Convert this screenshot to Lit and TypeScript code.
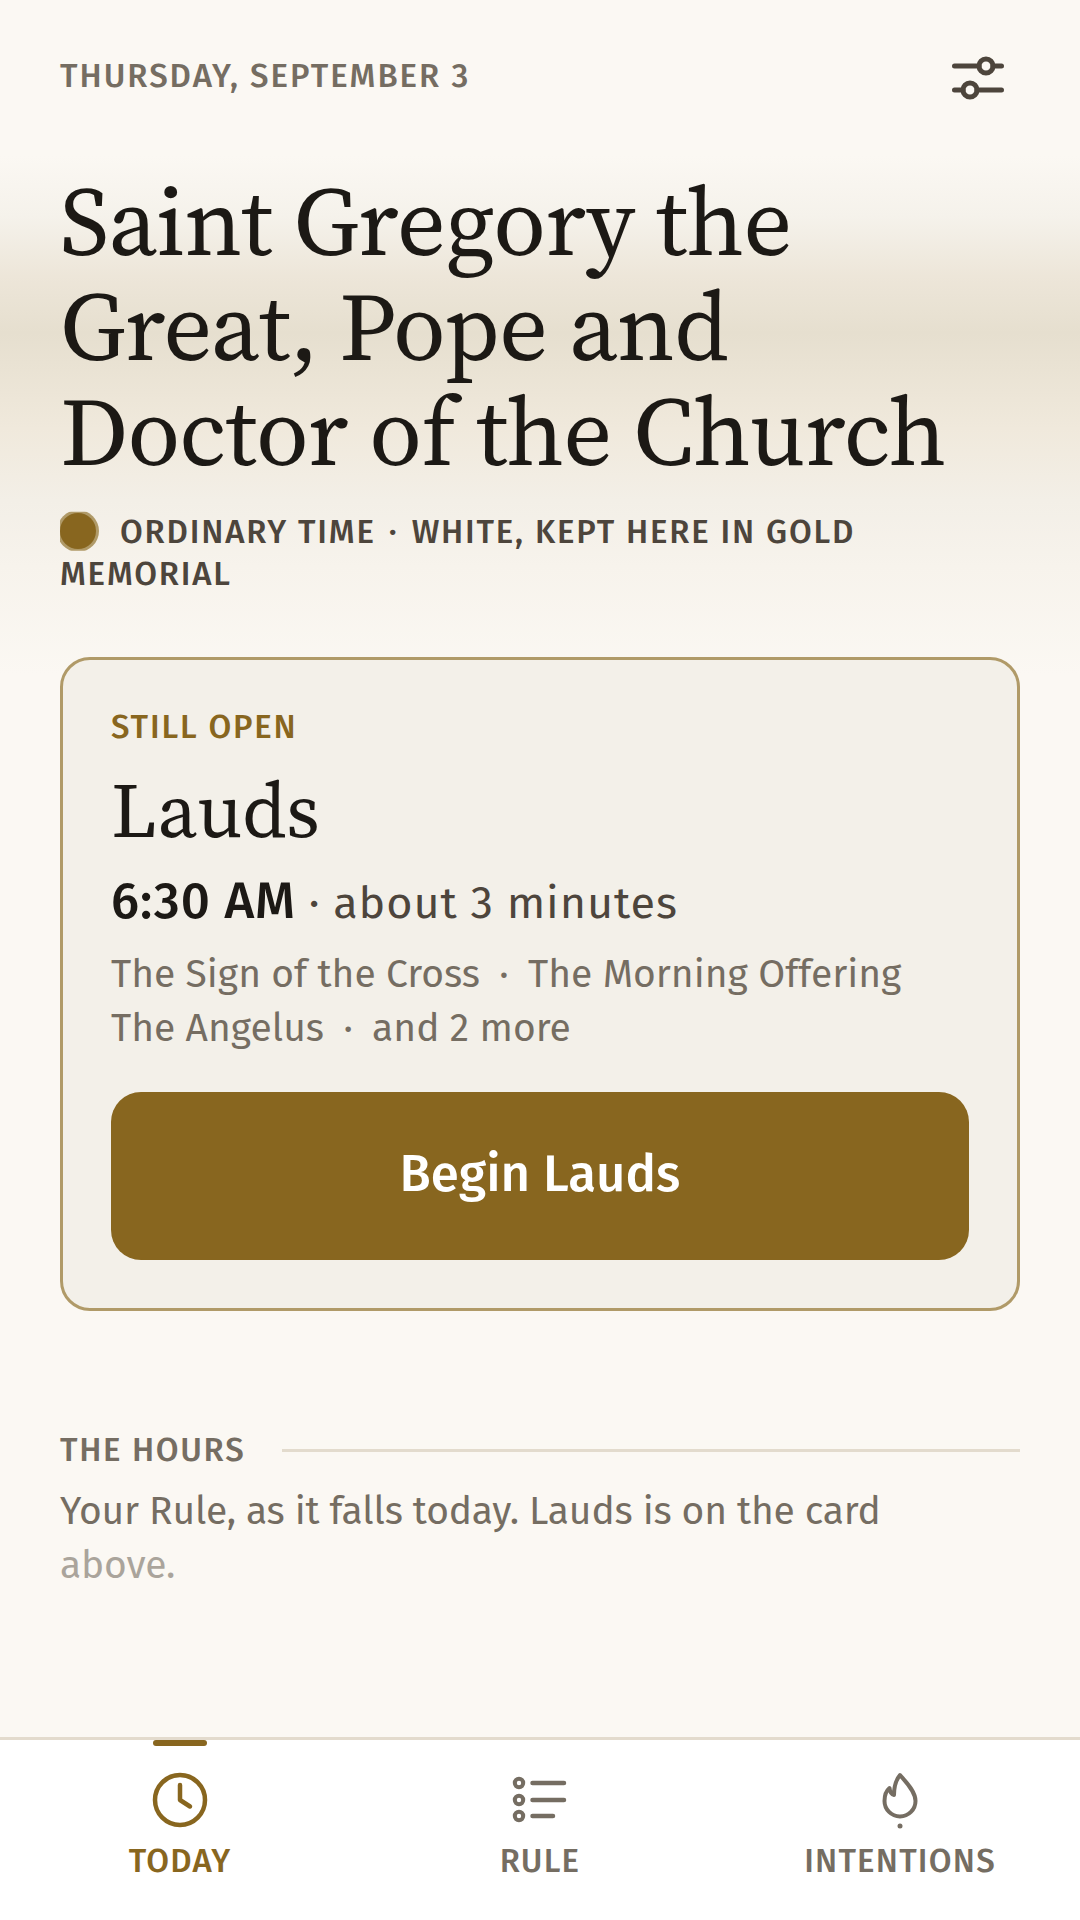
import { LitElement, html, css } from "lit";
import { customElement } from "lit/decorators.js";

@customElement("app-root")
export class AppRoot extends LitElement {
  static styles = css`
    :host {
      display: block;
      width: 1080px;
      height: 1920px;
      overflow: hidden;
      font-family: "Fira Sans", "Noto Sans", sans-serif;
      color: #1c1915;
    }
    .page {
      width: 360px;
      height: 640px;
      transform: scale(3);
      transform-origin: 0 0;
      display: flex;
      flex-direction: column;
      background: #fbf8f3;
    }
    .main {
      flex: 1;
      padding: 0 20px;
      background: linear-gradient(180deg, #fbf8f3 0, #fbf8f3 52px, #f5f2eb 72px, #ede6d9 92px, #e6dfcf 111px, #f0e9dc 143px, #f3efe7 167px, #f7f3ec 189px, #fbf8f3 225px);
    }
    .top {
      display: flex;
      justify-content: space-between;
      align-items: center;
      padding-top: 16px;
      height: 20px;
    }
    .date {
      margin-top: -2px;
      font-size: 11px;
      font-weight: 500;
      letter-spacing: 0.66px;
      color: #756d62;
    }
    .sliders { width: 20px; height: 20px; display: block; margin-right: 4px; }
    h1 {
      margin: 21px 0 0;
      font-family: "Source Serif 4", "Source Serif Pro", "Liberation Serif", serif;
      font-weight: 400;
      font-size: 32px;
      line-height: 35.2px;
      letter-spacing: -0.25px;
      color: #1c1915;
    }
    .season {
      margin-top: 8px;
      font-size: 11px;
      font-weight: 500;
      letter-spacing: 0.6px;
      line-height: 14px;
      color: #4d453c;
    }
    .season .sep { margin: 0 1px; }
    .dot {
      display: inline-block;
      width: 12px;
      height: 12px;
      border-radius: 50%;
      background: #88661f;
      box-shadow: 0 0 0 1px #b09a68;
      clip-path: inset(0 -1px -1px 0);
      vertical-align: -2px;
      margin-right: 8px;
    }
    .card {
      margin-top: 20px;
      height: 218px;
      box-sizing: border-box;
      border: 1px solid #b09a68;
      border-radius: 10px;
      background: #f3f0e9;
      padding: 16px 16px;
    }
    .kicker {
      font-size: 11px;
      font-weight: 500;
      letter-spacing: 0.6px;
      color: #88661f;
      line-height: 14px;
    }
    h2 {
      margin: 5px 0 0;
      font-family: "Source Serif 4", "Source Serif Pro", "Liberation Serif", serif;
      font-weight: 400;
      font-size: 26px;
      line-height: 30px;
    }
    .time {
      margin-top: 6px;
      font-size: 15px;
      line-height: 20px;
      letter-spacing: 0.3px;
      color: #4d453c;
    }
    .time b { font-weight: 500; color: #1c1915; font-size: 17px; }
    .parts {
      margin-top: 5px;
      font-size: 13px;
      line-height: 18px;
      color: #756d62;
    }
    .sep { margin: 0 3px; }
    .btn {
      margin-top: 12px;
      height: 56px;
      border-radius: 10px;
      background: #88661f;
      color: #fff;
      font-size: 17px;
      font-weight: 500;
      display: flex;
      align-items: center;
      justify-content: center;
    }
    .hours {
      margin-top: 40px;
      display: flex;
      align-items: center;
      gap: 12px;
      font-size: 11px;
      font-weight: 500;
      letter-spacing: 0.55px;
      color: #756d62;
    }
    .hours i { flex: 1; height: 1px; background: #e3dbcd; }
    .note {
      margin-top: 5px;
      font-size: 13px;
      line-height: 18px;
      letter-spacing: -0.065px;
      color: #756d62;
    }
    .fade { opacity: 0.6; }
    nav {
      height: 61px;
      box-sizing: border-box;
      border-top: 1px solid #e3dbcd;
      background: #fff;
      display: grid;
      grid-template-columns: repeat(3, 1fr);
    }
    .tab {
      position: relative;
      display: flex;
      flex-direction: column;
      align-items: center;
      padding-top: 9px;
      color: #756d62;
      font-size: 11px;
      font-weight: 500;
      letter-spacing: 0.4px;
    }
    .tab.on { color: #88661f; }
    .tab.on::before {
      content: "";
      position: absolute;
      top: 0;
      width: 18px;
      height: 2px;
      border-radius: 1px;
      background: #88661f;
    }
    .tab svg { width: 22px; height: 22px; display: block; margin-bottom: 3px; }
  `;

  render() {
    return html`
      <div class="page">
        <div class="main">
          <div class="top">
            <div class="date">THURSDAY, SEPTEMBER 3</div>
            <svg class="sliders" viewBox="0 0 60 60" fill="none" stroke="#4d453c" stroke-width="5" stroke-linecap="round">
              <path d="M6.500 18H31M45 18h8.500M6.500 42H15M29 42h24.500" />
              <circle cx="38" cy="18" r="7" />
              <circle cx="22" cy="42" r="7" />
            </svg>
          </div>
          <h1>Saint Gregory the Great, Pope and Doctor of the Church</h1>
          <div class="season"><span class="dot"></span>ORDINARY TIME <span class="sep">·</span> WHITE, KEPT HERE IN GOLD<br />MEMORIAL</div>
          <div class="card">
            <div class="kicker">STILL OPEN</div>
            <h2>Lauds</h2>
            <div class="time"><b>6:30 AM</b> · about 3 minutes</div>
            <div class="parts">The Sign of the Cross <span class="sep">·</span> The Morning Offering<br />The Angelus <span class="sep">·</span> and 2 more</div>
            <div class="btn">Begin Lauds</div>
          </div>
          <div class="hours"><span>THE HOURS</span><i></i></div>
          <div class="note">Your Rule, as it falls today. Lauds is on the card<br /><span class="fade">above.</span></div>
        </div>
        <nav>
          <div class="tab on">
            <svg viewBox="0 0 66 66" fill="none" stroke="currentColor" stroke-width="4.500" stroke-linecap="round" stroke-linejoin="round">
              <circle cx="33" cy="33" r="25" /><path d="M33 18V33L43 39.500" />
            </svg>
            TODAY
          </div>
          <div class="tab">
            <svg viewBox="0 0 66 66" fill="none" stroke="currentColor" stroke-width="4.500" stroke-linecap="round" stroke-linejoin="round">
              <path d="M25.500 16H57M25.500 33H57M25.500 49H46" />
              <circle cx="12" cy="16" r="4.200" stroke-width="4" /><circle cx="12" cy="33" r="4.200" stroke-width="4" /><circle cx="12" cy="49" r="4.200" stroke-width="4" />
            </svg>
            RULE
          </div>
          <div class="tab">
            <svg viewBox="0 0 66 66" fill="none" stroke="currentColor" stroke-width="4" stroke-linecap="round" stroke-linejoin="round">
              <path d="M33 8C38 14 48.500 24 48.500 34A15.500 15.500 0 0 1 17.500 34C17.500 29 19 24 22.500 21C23 25 24 27.500 27 28C27 20 29 13 33 8Z" />
              <circle cx="33" cy="59" r="2.500" fill="currentColor" stroke="none" />
            </svg>
            INTENTIONS
          </div>
        </nav>
      </div>
    `;
  }
}
